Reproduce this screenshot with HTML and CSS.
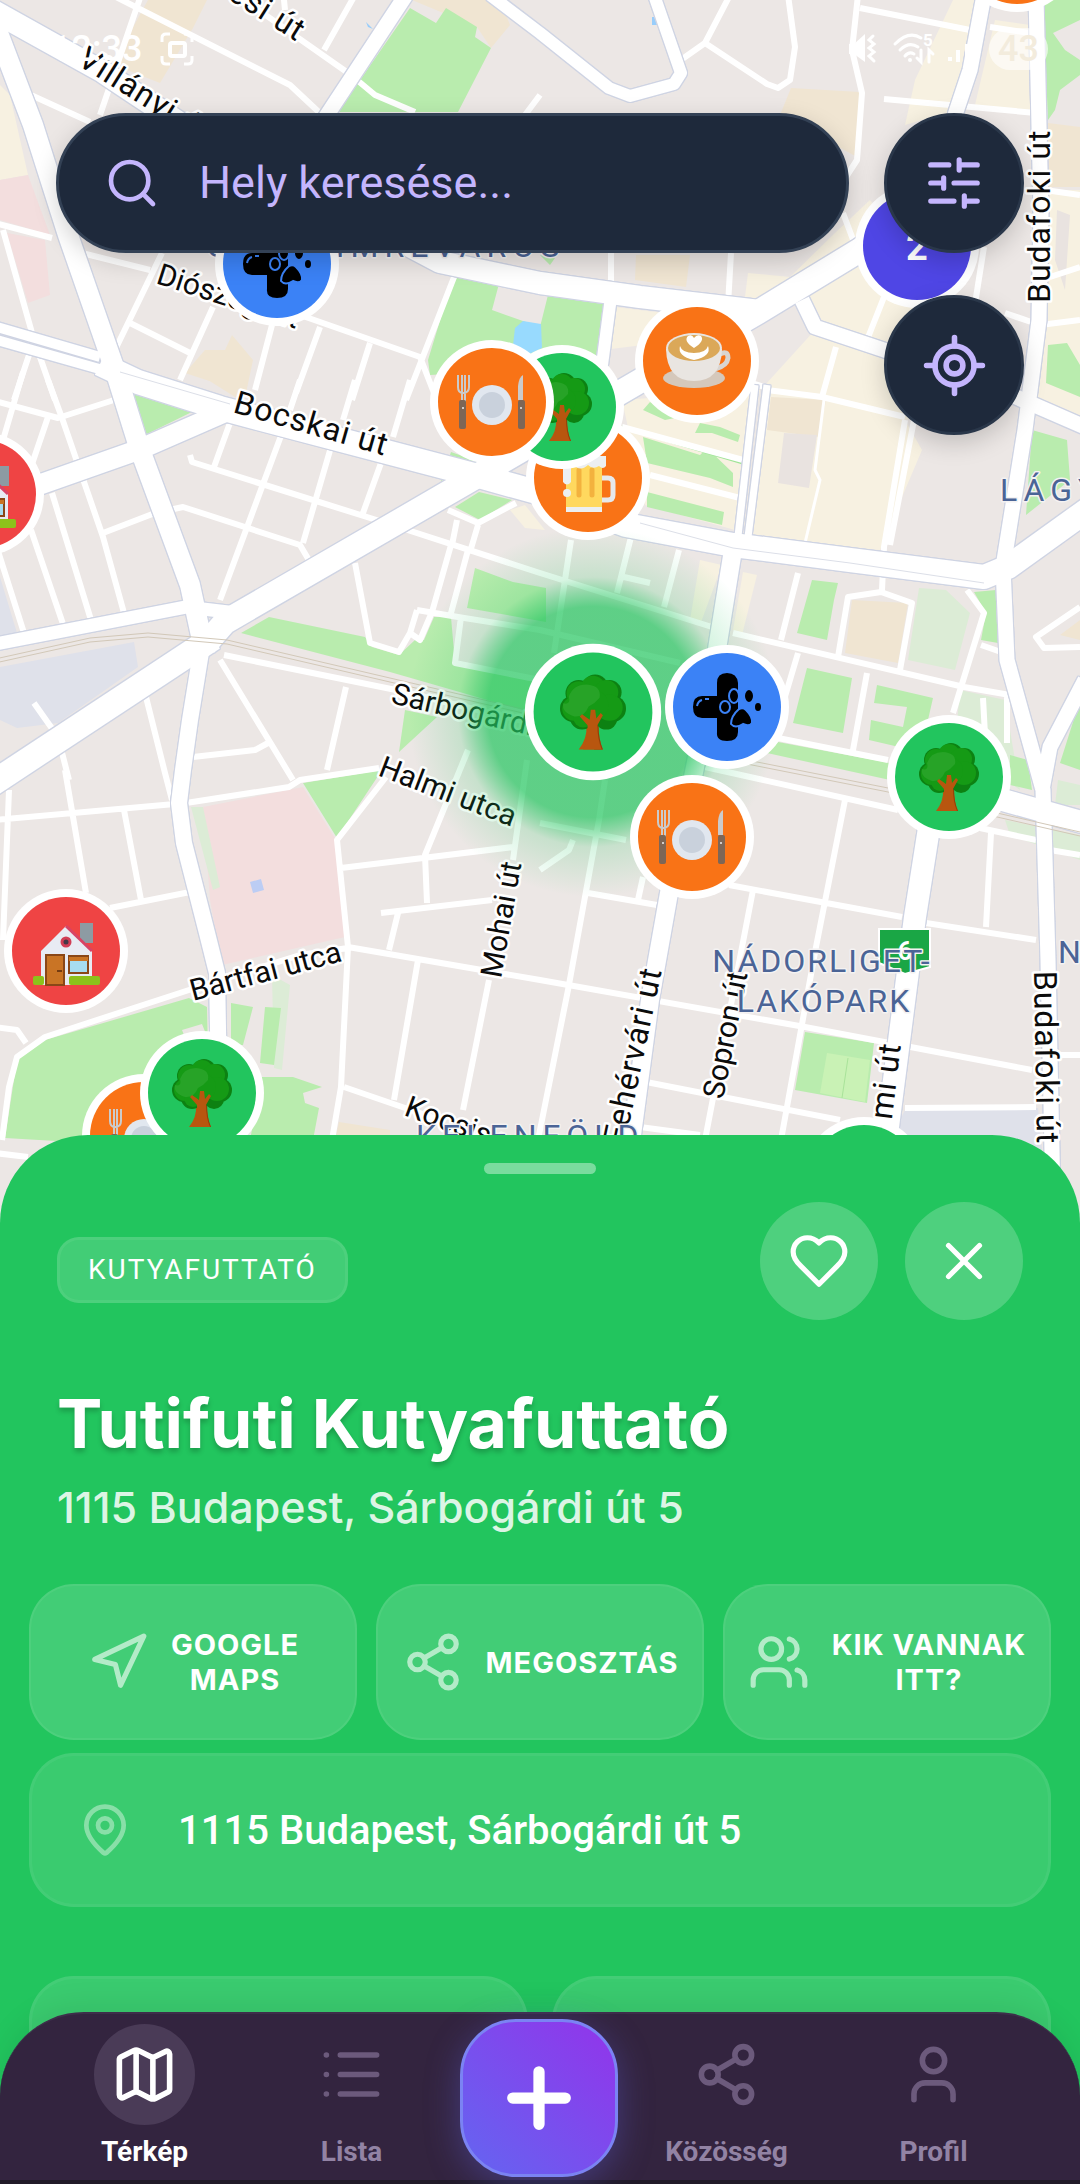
FILE: index.html
```html
<!DOCTYPE html>
<html lang="hu">
<head>
<meta charset="utf-8">
<meta name="viewport" content="width=device-width, initial-scale=1">
<title>Tutifuti Kutyafuttató</title>
<link rel="stylesheet" href="styles.css">
</head>
<body>
<div class="app">
<svg class="map" viewBox="0 0 1080 1240" role="img" aria-label="Térkép">
  <defs>
    <radialGradient id="glow">
      <stop offset="0" stop-color="#22c55e" stop-opacity=".7"/>
      <stop offset=".57" stop-color="#22c55e" stop-opacity=".7"/>
      <stop offset=".65" stop-color="#22c55e" stop-opacity=".45"/>
      <stop offset=".73" stop-color="#22c55e" stop-opacity=".18"/>
      <stop offset="1" stop-color="#22c55e" stop-opacity="0"/>
    </radialGradient>
    <g id="tree">
      <path fill="#b8560f" d="M-13 34Q-5 24-6 12L-13 2-10 0-4 6-2-4H2L4 5 9 0 11 3 5 12Q5 25 9 34Z"/>
      <path fill="#914108" d="M1 34Q4 20 2 10L9 1 11 3 5 12Q5 25 9 34Z"/>
      <g fill="#0d8112"><circle cx="2" cy="-22" r="12"/><circle cx="15" cy="-18" r="11"/><circle cx="18" cy="-3" r="12"/><circle cx="-13" cy="-17" r="12"/><circle cx="-18" cy="-3" r="12"/><circle cx="-10" cy="5" r="11"/><circle cx="12" cy="6" r="10"/></g>
      <g fill="#159a15"><circle cx="0" cy="-22" r="11"/><circle cx="12" cy="-18" r="11"/><circle cx="15" cy="-4" r="12"/><circle cx="-13" cy="-17" r="11"/><circle cx="-17" cy="-3" r="11"/><circle cx="0" cy="-6" r="14"/><circle cx="-9" cy="5" r="9"/></g>
      <path fill="#27a327" d="M-6-25Q8-24 6-13 2-8-4-5-8 5-17 4-29 0-27-8-20-6-22-14-18-25-6-25Z"/>
      <path fill="#b8560f" d="M-9 34Q-4 24-5 12L-12 4-10 2-3 7-2-2H2L3 6 7 1 9 3 4 12Q4 25 8 34Z"/>
    </g>
    <g id="plate">
      <path d="M-34-27V-15Q-34-9-29-9-23-9-23-15V-27M-30-27V0M-27-27V0" fill="none" stroke="#cbcbcb" stroke-width="2"/>
      <rect x="-33" y="-2" width="7" height="29" rx="2" fill="#7d6656"/><circle cx="-29" cy="6" r="1" fill="#eee"/>
      <circle cy="3" r="20" fill="#e1e7ef"/><circle cy="3" r="13" fill="#c9d1dc"/>
      <path fill="#cbcbcb" d="M26-2V-16Q27-25 31-27V-2Z"/><rect x="26" y="-2" width="7" height="29" rx="2" fill="#7d6656"/><circle cx="29" cy="6" r="1" fill="#eee"/>
    </g>
    <g id="house">
      <rect x="14" y="-28" width="13" height="20" fill="#8d9ba3"/>
      <path fill="#e8ebf3" d="M-25 0 0-25 26 0V34H-25Z"/><path d="M0-25 26 0" fill="none" stroke="#d84365" stroke-width="3"/>
      <circle cy="-9" r="4" fill="#453747" stroke="#d13d55" stroke-width="3"/>
      <rect x="-20" y="4" width="18" height="30" fill="#c97425" stroke="#8a4717" stroke-width="2"/><path d="M-9 20H-4" stroke="#743b12" stroke-width="2"/>
      <rect x="3" y="5" width="19" height="17" fill="#a7dcf0" stroke="#8a4717" stroke-width="2"/><path d="M3 8H22" stroke="#c97425" stroke-width="4"/>
      <rect x="-33" y="25" width="11" height="9" rx="2" fill="#8cc21b"/><rect x="3" y="25" width="31" height="9" rx="2" fill="#8cc21b"/>
    </g>
    <g id="coffee">
      <ellipse cx="-3" cy="17" rx="31" ry="10" fill="#d5c8bb"/>
      <path d="M23-7Q31-11 31-3 30 5 18 8" fill="none" stroke="#d9d5d1" stroke-width="5"/>
      <path fill="#e9e5e1" d="M-31-12Q-30 20-3 20T25-12Z"/>
      <ellipse cx="-3" cy="-13" rx="28" ry="15" fill="#e9e5e1"/><ellipse cx="-3" cy="-13" rx="26" ry="13" fill="#dba858"/>
      <path fill="#fff" d="M-3-13Q-14-20-9-25-5-27-3-23 0-27 4-25 8-20-3-13ZM-17-15Q-15-8-3-8 9-8 11-15 15-5-3-1-20-5-17-15Z"/>
    </g>
    <g id="beer">
      <path d="M14 0H20Q25 0 25 5V17Q25 22 20 22H14" fill="none" stroke="#e6e9ec" stroke-width="5"/>
      <rect x="-22" y="-20" width="36" height="50" fill="#ffd85e"/><path d="M-9-8V17M4-8V17" stroke="#f3b23e" stroke-width="5" stroke-linecap="round"/>
      <rect x="-22" y="29" width="36" height="5" fill="#eceff1"/>
      <path fill="#eceff1" d="M-25-22H18V-12Q15-8 11-12 5-8 0-13-8-6-14-13L-17-12V4Q-21 9-25 4Z"/><circle cx="-21" cy="15" r="4" fill="#eceff1"/>
    </g>
    <g id="vet">
      <path d="M-10-24Q-10-34 0-34T11-24V25Q11 34 0 34T-10 25V11H-25Q-34 11-34 0T-25-11H-10Z"/>
      <g stroke="#3b82f6" stroke-width="2"><ellipse cx="7" cy="-11" rx="5" ry="7"/><ellipse cx="22" cy="-11" rx="5" ry="7"/><ellipse cx="31" cy="0" rx="4" ry="5"/><ellipse cx="-2" cy="0" rx="5" ry="6"/><path d="M4 17Q4 9 12 2 16 0 19 3 26 10 25 16 22 20 16 17 8 22 4 17Z"/></g>
      <path d="M-30-1Q-29-6-25-7M-22-8H-18" fill="none" stroke="#3b82f6" stroke-width="2"/>
    </g>
    <g id="orange"><circle r="62" fill="#fff"/><circle r="54" fill="#f97316"/></g>
    <g id="green"><circle r="62" fill="#fff"/><circle r="54" fill="#22c55e"/></g>
    <g id="red"><circle r="62" fill="#fff"/><circle r="54" fill="#ef4444"/></g>
    <g id="blue"><circle r="62" fill="#fff"/><circle r="54" fill="#3b82f6"/></g>
    <g id="avenues">
      <path stroke-width="22" d="M-10 9 103 72 190 130 440 262 540 283 640 297 760 311"/>
      <path stroke-width="20" d="M-5 25 33 125 68 235 115 370 139 447 190 585 203 645"/>
      <path stroke-width="16" d="M203 640 190 720 183 770 179 803 184 843 207 933 217 973 220 1140"/>
      <path stroke-width="10" d="M-10 325 100 357M-10 338 110 372"/>
      <path stroke-width="24" d="M100 364 138 382 220 408 379 450 482 477 540 493 626 525 733 545 850 560 984 577 1008 567 1090 508"/>
      <path stroke-width="20" d="M-20 506 30 488 138 450 225 412"/>
      <path stroke-width="24" d="M205 645 225 622 465 483 760 311 860 250 930 200"/>
      <path stroke-width="25" d="M213 638 -10 785"/>
      <path stroke-width="13" d="M-10 645 186 607 245 614"/>
      <path stroke-width="12" d="M611 297 602 365"/>
      <path stroke-width="7" d="M755 385 737 545M767 385 747 545"/>
      <path stroke-width="18" d="M733 550 712 680 695 767 669 893 650 1000 630 1150"/>
      <path stroke-width="15" d="M1036-5 1041 213 1039 320 1025 430 1003 567 1007 660 1043 790 1048 960 1053 1200M1085 680 1050 747 1042 790M984-5 970 70 955 115"/>
      <path stroke-width="15" d="M802 300 815 327 884 350 1000 390 1085 427"/>
      <path stroke-width="22" d="M935 790 915 917 885 1150"/>
      <path stroke-width="22" d="M960 788 1085 823"/>
      <path stroke-width="12" d="M490-5 540 33 609 88 630 96 674 84 681 73 654-5"/>
      <path stroke-width="15" d="M406-5 327 115 240 250"/>
    </g>
  </defs>

  <rect width="1080" height="1240" fill="#ece7e5"/>

  <g fill="#f7f1e1">
    <path d="M0 85 10 95 28 175 0 180ZM953 0H977L967 77 950 112 905 125 915 80ZM995 20 1030 25 1032 110 975 105ZM748 273 790 277 835 233 870 200 900 240 930 300 884 345 820 325 800 305 745 297ZM615 307 680 315 643 345 603 350ZM765 385 815 330 900 355 1010 395 905 420 922 450 905 490 880 550 750 540ZM622 400 760 390 735 530 645 505ZM1048 190H1080V420L1030 405ZM510 510 525 505 545 530 525 528ZM700 560 722 565 700 625 690 620ZM743 572 757 575 742 635 733 630Z"/>
  </g>
  <g fill="#f0e5d2">
    <path d="M148 0H207L193 28 160 83 127 70 115 60ZM412 0H500L510 25 491 48 477 27ZM185 373 205 350 225 350 232 335 253 360 246 393ZM200 375 255 393 240 400ZM791 88 860 92 857 157 780 115ZM636 255H690L686 287 635 280ZM771 397 826 400 819 437 767 430ZM1048 123 1080 127V187H1048ZM852 600 908 603 898 663 845 653ZM1060 635 1080 620V640ZM339 1122 390 1130V1140H335Z"/>
  </g>
  <path fill="#f3dede" d="M0 180 28 175 50 235 0 220ZM7 233 45 240 50 295 28 303ZM203 807 303 787 336 840 345 937 222 965 210 900Z"/>
  <path fill="#e9e3e0" d="M784 433 817 435 809 488 778 483ZM1057 210 1070 215 1065 290 1055 260Z"/>
  <path fill="#dfe1ea" d="M0 577 17 633 0 640ZM0 667 134 642 138 667 58 723 17 728 0 720ZM905 1110 1038 1108 1045 1180 890 1140Z"/>
  <path fill="#dcecd6" d="M191 807H203L220 887 213 890ZM272 975 290 985 282 1070 274 1068ZM919 588 946 590 970 613 955 670 908 660ZM960 690 1005 700 1020 790 955 745ZM1058 780 1080 785V805H1055ZM1005 820 1080 835V860L1010 835Z"/>
  <g fill="#b9ecae">
    <path d="M410 8 436 23 446 8 477 27 475 37 491 48 458 112H337L358 83ZM456 268 500 280 492 310 540 327 548 295 605 302 597 365 430 375 428 360ZM127 387 200 408 145 435ZM451 452 482 463 449 458ZM441 480 455 488 443 490ZM455 507 479 492 512 500 480 520Z"/>
    <path d="M241 633 269 617 365 637 372 647 399 655 415 640H424L434 617H451L455 663 540 682V715L390 672ZM475 568 513 582 546 588V622L467 608ZM405 710 437 717 399 752ZM303 783 382 770 337 838Z"/>
    <path d="M45 1040 189 998 207 1007 210 1150 5 1138 17 1060ZM231 1003 253 1007 243 1045H231ZM265 1007 281 1008 274 1065 260 1063ZM262 1077H293L322 1087 303 1093 305 1103 319 1108 313 1140H250Z"/>
    <path d="M1043 0H1080V20L1053 33 1065 50 1080 60V75L1060 90 1055 110 1048 120ZM1048 345 1067 343 1080 365V397L1046 383ZM1032 430 1067 440 1070 480 1026 515ZM812 580 838 583 834 600 827 640 797 633ZM974 592 996 590 998 643 981 640 986 613ZM807 668 852 678 843 733 793 723ZM877 685 933 698 925 733 912 750 869 740 871 720 903 727 907 707 874 703ZM1080 700 1060 763 1080 770ZM778 742 890 763V780L767 753ZM1010 755 1028 760 1032 790 1010 785Z"/>
    <path d="M643 437 700 455 707 448 733 473V487L710 478 647 463ZM647 492 724 512 722 525 647 507ZM643 410 650 402 675 418 665 420ZM695 433 700 423 720 427 740 435 738 442 712 433ZM805 1032 874 1043 867 1103 795 1090ZM540 255 555 258 550 265Z"/>
    <path fill="#c9f2b5" d="M827 1053 870 1060 865 1102 820 1093Z"/>
    <path fill="#ece7e5" d="M182 1030 202 1024 206 1034 186 1040Z"/>
  </g>
  <path d="M848 1058 842 1098" stroke="#a9e39a" stroke-width="1"/>
  <path d="M622 427 743 463" stroke="#9fe497" stroke-width="3"/>
  <path fill="#98dafe" d="M513 345 515 328 523 321 541 324 542 348 525 356Z"/>
  <path fill="#98cdfb" d="M366 22 373 29 368 27ZM652 17H657V25H652Z"/>
  <path fill="#bccdf4" d="M250 882 261 879 264 890 253 893Z"/>

  <g class="streets">
    <path d="M141-5 100 115M112-5 290 85 322 115M355-5 324 50M283-10 285 10M230-10 351 75 375 95 415 112M20 90 90 122M540 95 525 115M-5 223 52 238M3 230 34 340 55 400M82 253 150 270M162 253 115 350M213 307 180 380M130 323 190 353M300 315 420 357 434 393M272 325 255 390M320 327 296 393M370 343 352 400M458 267 406 400M34 340 14 400"/>
    <path d="M730-5 705 43 678 62M788-5 795 47 790 80 778 88 767 84 705 43M858-5 852 50 862 93 857 160 846 177M860 8 970 30M990 27 1036 34M884 99 1036 113M611 253V290M731 253 728 305M843 213 855 245M884 297 867 340M984 247 974 310M836 347 822 397M767 390 822 397 905 417M1045 190 1080 195M1050 277 1080 267M1005 313 1040 325 1080 320M742 380 768 388"/>
    <path d="M23 372 3 440M-5 401 58 418 114 400M48 380 62 418 103 537 124 613M48 417 31 467M52 493 91 620M31 530 64 627M-3 548 24 633M103 533 155 513 183 507 300 545 313 567M190 455 192 462 386 523 540 573 712 627M231 420 214 467M282 433 220 600M331 447 303 543M381 463 363 513M300 380 290 410M355 380 343 420M410 380 393 437M355 563 370 643 399 652 410 633 417 610M410 633 420 640 432 612 451 545M417 610 458 617 540 630 680 663M468 550 451 613M461 617 455 663 540 680M448 510 478 523 516 503M457 520 452 545M478 525 470 552"/>
    <path d="M220 660 293 780M224 655 396 690 560 730M346 687 327 770M34 703 58 737 69 780M145 693 165 773 172 800M193 757 255 750 268 743M65 770 86 893M9 790 3 940M-5 820 186 803 289 787 300 780 379 768M124 810 141 900M110 908 190 892M386 777 337 840 348 947 341 1087 332 1140M341 868 513 847M468 750 425 855 427 903M381 913 492 900M398 913 389 950M348 947 540 980 805 1027 1032 1070M418 960 394 1100M344 1087 440 1120M489 980 463 1110M527 760 513 860M-5 1027 17 1030 26 1043M-5 1153 28 1157M348 948 300 955 189 990 45 1037 17 1057 9 1087 2 1140"/>
    <path d="M571 540 554 653M631 537 617 593M679 550 664 607M624 577 650 583M733 633 964 687 1010 695M798 573 781 640M838 657 848 597 881 592 912 603 900 670M798 653 784 700M867 673 853 750M967 590 984 613 953 713M981 645 1001 652M983 698 985 735M1007 695V743M778 738 888 760M1080 607 1036 637 1044 648 1080 647M622 427 743 460M650 475 740 498M905 420 884 547 882 590M914 420 890 545"/>
    <path d="M705 767 898 810M845 800 816 947 781 1140M729 885 902 917M926 923 1036 940M753 890 705 1140M991 833 986 927M980 828 1036 840M605 780 599 820 568 990 538 1140M540 823 626 840M588 893 657 905M573 840 569 850 540 870M643 877 638 900M636 1080 840 1120M905 1108 1036 1107M1050 1055 1080 1055M1050 850 1080 855M640 1127 700 1135"/>
    <path stroke-width="3" d="M824 400 815 470 820 480 805 543"/>
  </g>
  <use href="#avenues" class="casing"/>
  <use href="#avenues" class="fill"/>
  <path class="rail" d="M-5 659 90 638 148 633 227 640 540 713M-5 663 90 642 148 637 227 644 540 717M747 760 888 788 1080 832M747 764 888 792 1080 836"/>
  <path class="rail lane" d="M640 523 733 548 850 563 984 583M120 372 230 404"/>

  <g class="road-name">
    <text transform="translate(297 42) rotate(32)" text-anchor="end">Ménesi út</text>
    <text transform="translate(76 64) rotate(32)">Villányi út</text>
    <text class="small" transform="translate(155 283) rotate(18)">Diószegi út</text>
    <text transform="translate(232 412) rotate(16)">Bocskai út</text>
    <text class="small" transform="translate(390 703) rotate(13)">Sárbogárdi út</text>
    <text class="small" transform="translate(377 775) rotate(21)">Halmi utca</text>
    <text class="small" transform="translate(501 979) rotate(-80)">Mohai út</text>
    <text class="small" transform="translate(193 1001) rotate(-15)">Bártfai utca</text>
    <text class="small" transform="translate(403 1115) rotate(20)">Kocsis utca</text>
    <text transform="translate(662 970) rotate(-78)" text-anchor="end">Fehérvári út</text>
    <text class="small" transform="translate(723 1100) rotate(-79)">Sopron út</text>
    <text transform="translate(901 1044) rotate(-83)" text-anchor="end">Etele mi út</text>
    <text transform="translate(1034 971) rotate(89)">Budafoki út</text>
    <text transform="translate(1050 303) rotate(-90)">Budafoki út</text>
  </g>
  <path d="M879 929H930V967L905 974 879 963Z" fill="#1aa645" stroke="#fff" stroke-width="2"/>
  <text x="905" y="960" text-anchor="middle" class="shield">6</text>
  <g class="district">
    <text class="wide" x="208" y="257">SZENTIMREVÁROS</text>
    <text class="wide" x="416" y="1147">KELENFÖLD</text>
    <text x="822" y="972" text-anchor="middle">NÁDORLIGET-</text>
    <text x="824" y="1012" text-anchor="middle">LAKÓPARK</text>
    <text class="wide" x="1000" y="501">LÁGYMÁNYOS</text>
    <text x="1058" y="963">NÁDOR</text>
  </g>

  <circle cx="593" cy="712" r="185" fill="url(#glow)"/>
  <g transform="translate(1017 -50)"><use href="#orange"/></g>
  <g transform="translate(277 264)"><use href="#blue"/><use href="#vet"/></g>
  <g transform="translate(917 246)"><circle r="62" fill="#fff"/><circle r="54" fill="#4f46e5"/><text y="14" text-anchor="middle" class="cluster">2</text></g>
  <g transform="translate(697 361)"><use href="#orange"/><use href="#coffee"/></g>
  <g transform="translate(588 478)"><use href="#orange"/><use href="#beer"/></g>
  <g transform="translate(562 407)"><use href="#green"/><use href="#tree"/></g>
  <g transform="translate(492 402)"><use href="#orange"/><use href="#plate"/></g>
  <g transform="translate(-18 494)"><use href="#red"/><use href="#house"/></g>
  <g transform="translate(66 951)"><use href="#red"/><use href="#house"/></g>
  <g transform="translate(727 707)"><use href="#blue"/><use href="#vet"/></g>
  <g transform="translate(949 777)"><use href="#green"/><use href="#tree"/></g>
  <g transform="translate(692 837)"><use href="#orange"/><use href="#plate"/></g>
  <g transform="translate(144 1136)"><use href="#orange"/><use href="#plate"/></g>
  <g transform="translate(202 1093)"><use href="#green"/><use href="#tree"/></g>
  <g transform="translate(864 1179)"><use href="#green"/><use href="#tree"/></g>
  <g transform="translate(593 712) scale(1.1)"><use href="#green"/><use href="#tree"/></g>
</svg>

<header class="top">
  <div class="status">
    <span class="clock">12:33</span>
    <svg class="capture" viewBox="0 0 34 34" aria-hidden="true"><path d="M2 10V6Q2 2 6 2H10M24 2H28Q32 2 32 6V10M32 24V28Q32 32 28 32H24M10 32H6Q2 32 2 28V24" fill="none" stroke="#fff" stroke-width="3"/><rect x="10" y="11" width="15" height="13" rx="2" fill="none" stroke="#fff" stroke-width="4"/></svg>
    <svg class="signals" viewBox="0 0 130 42" aria-hidden="true"><g fill="none" stroke="#fff" stroke-width="3" stroke-linecap="round"><path d="M24 8 20 12 25 16 20 20 25 24 20 28 25 33"/><path d="M46 16Q60 2 72 10M51 22Q60 13 69 19M56 28Q60 23 65 26M72 22V34L68 30M80 34V22L84 26"/></g><path fill="#fff" d="M0 16H5L16 6V34L5 26H0ZM99 29H103V33H99ZM107 22H111V34H107ZM116 16H120V34H116Z"/><circle cx="61" cy="32" r="2" fill="#fff"/><text x="74" y="18" class="gen">5</text></svg>
    <span class="battery">43</span>
  </div>
  <div class="tools">
    <label class="search">
      <svg class="icon i56" viewBox="0 0 24 24" aria-hidden="true"><circle cx="11" cy="11" r="8"/><path d="m21 21-4.300-4.300"/></svg>
      <input type="search" placeholder="Hely keresése..." aria-label="Hely keresése">
    </label>
    <div class="tool-stack">
      <button class="round" aria-label="Szűrők"><svg class="icon i62" viewBox="0 0 24 24"><path d="M10 5H3M12 19H3M14 3v4M16 17v4M21 12h-9M21 19h-5M21 5h-7M8 10v4M8 12H3"/></svg></button>
      <button class="round" aria-label="Saját helyzet"><svg class="icon i67" viewBox="0 0 24 24"><path d="M2 12h3M19 12h3M12 2v3M12 19v3"/><circle cx="12" cy="12" r="7"/><circle cx="12" cy="12" r="3"/></svg></button>
    </div>
  </div>
</header>

<main class="sheet">
  <div class="handle"></div>
  <div class="sheet-head">
    <span class="chip">KUTYAFUTTATÓ</span>
    <div class="sheet-buttons">
      <button class="ghost" aria-label="Kedvenc"><svg class="icon i62" viewBox="0 0 24 24"><path d="M19 14c1.490-1.460 3-3.210 3-5.500A5.500 5.500 0 0 0 16.500 3c-1.760 0-3 .5-4.500 2-1.500-1.500-2.740-2-4.500-2A5.500 5.500 0 0 0 2 8.500c0 2.300 1.500 4.050 3 5.500l7 7Z"/></svg></button>
      <button class="ghost" aria-label="Bezárás"><svg class="icon i62" viewBox="0 0 24 24"><path d="M18 6 6 18M6 6l12 12"/></svg></button>
    </div>
  </div>
  <div class="title-block">
    <h1>Tutifuti Kutyafuttató</h1>
    <p>1115 Budapest, Sárbogárdi út 5</p>
  </div>
  <div class="actions">
    <button class="action"><svg class="icon i62" viewBox="0 0 24 24"><path d="M3 11 22 2 13 21 11 13Z"/></svg><span>GOOGLE<br>MAPS</span></button>
    <button class="action"><svg class="icon i62" viewBox="0 0 24 24"><circle cx="18" cy="5" r="3"/><circle cx="6" cy="12" r="3"/><circle cx="18" cy="19" r="3"/><path d="m8.590 13.510 6.830 3.980M15.410 6.510l-6.820 3.980"/></svg><span>MEGOSZTÁS</span></button>
    <button class="action"><svg class="icon i62" viewBox="0 0 24 24"><path d="M16 21v-2a4 4 0 0 0-4-4H6a4 4 0 0 0-4 4v2M22 21v-2a4 4 0 0 0-3-3.870M16 3.130a4 4 0 0 1 0 7.750"/><circle cx="9" cy="7" r="4"/></svg><span>KIK VANNAK<br>ITT?</span></button>
  </div>
  <div class="info">
    <svg class="icon i56" viewBox="0 0 24 24" aria-hidden="true"><path d="M20 10c0 4.990-5.540 10.190-7.400 11.800a1 1 0 0 1-1.200 0C9.540 20.190 4 14.990 4 10a8 8 0 0 1 16 0"/><circle cx="12" cy="10" r="3"/></svg>
    <span>1115 Budapest, Sárbogárdi út 5</span>
  </div>
  <div class="cards"><div class="card"></div><div class="card"></div></div>
</main>

<nav class="nav">
  <a class="tab active" href="#terkep"><span class="disc"><svg class="icon i67" viewBox="0 0 24 24"><path d="M14.106 5.553a2 2 0 0 0 1.788 0l3.659-1.830A1 1 0 0 1 21 4.619v12.764a1 1 0 0 1-.553.894l-4.553 2.277a2 2 0 0 1-1.788 0l-4.212-2.106a2 2 0 0 0-1.788 0l-3.659 1.830A1 1 0 0 1 3 19.381V6.618a1 1 0 0 1 .553-.894l4.553-2.277a2 2 0 0 1 1.788 0zM15 5.764v15M9 3.236v15"/></svg></span>Térkép</a>
  <a class="tab" href="#lista"><span class="disc"><svg class="icon i67" viewBox="0 0 24 24"><path d="M3 5h.01M3 12h.01M3 19h.01M8 5h13M8 12h13M8 19h13"/></svg></span>Lista</a>
  <button class="add" aria-label="Új hely"><svg class="icon i90" viewBox="0 0 24 24"><path d="M5 12h14M12 5v14"/></svg></button>
  <a class="tab" href="#kozosseg"><span class="disc"><svg class="icon i67" viewBox="0 0 24 24"><circle cx="18" cy="5" r="3"/><circle cx="6" cy="12" r="3"/><circle cx="18" cy="19" r="3"/><path d="m8.590 13.510 6.830 3.980M15.410 6.510l-6.820 3.980"/></svg></span>Közösség</a>
  <a class="tab" href="#profil"><span class="disc"><svg class="icon i67" viewBox="0 0 24 24"><path d="M19 21v-2a4 4 0 0 0-4-4H9a4 4 0 0 0-4 4v2"/><circle cx="12" cy="7" r="4"/></svg></span>Profil</a>
</nav>
</div>
</body>
</html>
```
FILE: styles.css
```css
* { box-sizing: border-box; }
body { margin: 0; font-family: Roboto, "Noto Sans", sans-serif; }
button { border: 0; padding: 0; font: inherit; color: inherit; cursor: pointer; }

.app {
  position: relative;
  display: flex;
  flex-direction: column;
  height: 100vh;
  overflow: hidden;
  background: #ece7e5;
}

/* Map canvas behind everything */
.map { position: absolute; top: 0; left: 0; width: 100%; }
.streets { fill: none; stroke: #fff; stroke-width: 6; stroke-linejoin: round; }
.casing, .fill { fill: none; stroke-linejoin: round; }
.casing { stroke: #cfd4e3; }
.fill { stroke: #fff; }
.casing { filter: drop-shadow(1px 0 #cfd4e3) drop-shadow(-1px 0 #cfd4e3) drop-shadow(0 1px #cfd4e3) drop-shadow(0 -1px #cfd4e3); }
.rail { fill: none; stroke: #d2c8b8; stroke-width: 1; }
.rail.lane { stroke: #dcdfe8; }
.road-name text {
  font-size: 32px;
  letter-spacing: 1px;
  fill: #0b0b0b;
  stroke: #fff;
  stroke-width: 5px;
  stroke-linejoin: round;
  paint-order: stroke;
}
.road-name .small { font-size: 30px; letter-spacing: 0; }
.district text {
  font-size: 32px;
  letter-spacing: 2px;
  fill: #4b6496;
  stroke: #f4f2f2;
  stroke-width: 3px;
  stroke-linejoin: round;
  paint-order: stroke;
}
.district .wide { letter-spacing: 6px; }
.shield { font-size: 26px; font-weight: 700; fill: #fff; }
.cluster { font-size: 38px; font-weight: 700; fill: #fff; }
.gen { font-size: 17px; font-weight: 700; fill: #fff; }

/* Icons */
.icon {
  flex: none;
  fill: none;
  stroke: currentColor;
  stroke-width: 2;
  stroke-linecap: round;
  stroke-linejoin: round;
}
.i56 { width: 56px; height: 56px; }
.i62 { width: 62px; height: 62px; }
.i67 { width: 67px; height: 67px; }
.i90 { width: 90px; height: 90px; stroke-width: 3; }

/* Top overlay */
.top { position: relative; flex: 1; padding: 0 56px; }
.status {
  display: flex;
  align-items: center;
  height: 113px;
  padding: 0 0 15px;
  margin: 0 -24px 0 -5px;
  color: #fff;
}
.clock { font-size: 36px; font-weight: 500; margin-right: 18px; }
.capture { width: 34px; height: 34px; }
.signals { width: 130px; height: 42px; margin-left: auto; margin-right: 10px; }
.battery {
  padding: 0 9px;
  border-radius: 21px;
  background: rgba(255, 255, 255, .6);
  color: #f3ecdd;
  font-size: 36px;
  font-weight: 500;
  line-height: 42px;
}
.tools { display: flex; align-items: flex-start; gap: 35px; }
.search {
  flex: 1;
  display: flex;
  align-items: center;
  gap: 39px;
  height: 140px;
  padding: 0 45px;
  border: 3px solid #334155;
  border-radius: 70px;
  background: #1e293b;
  color: #c4b5fd;
  box-shadow: 0 8px 24px rgba(0, 0, 0, .18);
}
.search input {
  flex: 1;
  min-width: 0;
  padding: 0;
  border: 0;
  outline: 0;
  background: none;
  color: inherit;
  font: 400 45px/56px Roboto, sans-serif;
}
.search input::placeholder { color: #c4b5fd; opacity: 1; }
.tool-stack { display: flex; flex-direction: column; gap: 42px; }
.round {
  display: grid;
  place-items: center;
  width: 140px;
  height: 140px;
  border: 3px solid #2a374a;
  border-radius: 50%;
  background: #1e293b;
  color: #c4b5fd;
  box-shadow: 0 8px 24px rgba(0, 0, 0, .18);
}

/* Place sheet */
.sheet {
  position: relative;
  padding: 28px 29px 0;
  border-radius: 88px 88px 0 0;
  background: #22c55e;
  color: #fff;
}
.handle {
  width: 112px;
  height: 11px;
  margin: 0 auto 28px;
  border-radius: 6px;
  background: rgba(255, 255, 255, .4);
}
.sheet-head {
  display: flex;
  justify-content: space-between;
  align-items: flex-start;
  padding: 0 28px;
}
.chip {
  margin-top: 35px;
  padding: 0 28px;
  border: 3px solid rgba(255, 255, 255, .06);
  border-radius: 22px;
  background: rgba(255, 255, 255, .15);
  font-size: 28px;
  line-height: 60px;
  letter-spacing: 2px;
}
.sheet-buttons { display: flex; gap: 27px; }
.ghost {
  display: grid;
  place-items: center;
  width: 118px;
  height: 118px;
  border-radius: 50%;
  background: rgba(255, 255, 255, .2);
}
.title-block { padding: 61px 28px 49px; font-family: Inter, sans-serif; }
.title-block h1 {
  margin: 0 0 14px;
  font-size: 68px;
  line-height: 84px;
  font-weight: 700;
  text-shadow: 0 4px 5px rgba(0, 0, 0, .2);
}
.title-block p {
  margin: 0;
  font-size: 43px;
  line-height: 56px;
  font-weight: 500;
  color: rgba(255, 255, 255, .85);
}
.actions { display: grid; grid-template-columns: repeat(3, 1fr); gap: 19px; }
.action {
  display: flex;
  align-items: center;
  justify-content: center;
  gap: 22px;
  height: 156px;
  border: 2px solid rgba(255, 255, 255, .06);
  border-radius: 45px;
  background: rgba(255, 255, 255, .15);
  font: 700 29px/35px Inter, sans-serif;
  letter-spacing: 1px;
  color: #fff;
}
.action .icon { opacity: .6; }
.info {
  display: flex;
  align-items: center;
  gap: 45px;
  height: 154px;
  margin: 13px 0 69px;
  padding: 0 45px;
  border: 3px solid rgba(255, 255, 255, .05);
  border-radius: 45px;
  background: rgba(255, 255, 255, .11);
  font-size: 40px;
  font-weight: 500;
}
.info .icon { opacity: .4; }
.cards { display: grid; grid-template-columns: 1fr 1fr; gap: 24px; }
.card {
  height: 208px;
  border: 3px solid rgba(255, 255, 255, .05);
  border-radius: 45px 45px 0 0;
  background: rgba(255, 255, 255, .11);
}

/* Bottom navigation, over the sheet */
.nav {
  position: absolute;
  left: 0;
  right: 0;
  bottom: 0;
  display: grid;
  grid-template-columns: 1fr 1fr 168px 1fr 1fr;
  justify-items: center;
  padding: 10px 43px 11px 41px;
  border-top: 2px solid #3d2e4a;
  border-bottom: 4px solid #211a28;
  border-radius: 84px 84px 0 0;
  background: #33243f;
  box-shadow: 0 -6px 30px rgba(0, 0, 0, .08);
}
.tab {
  display: flex;
  flex-direction: column;
  align-items: center;
  gap: 10px;
  color: #9283a4;
  font-size: 28px;
  font-weight: 700;
  line-height: 34px;
  text-decoration: none;
}
.tab .icon { color: #6c5a7c; }
.disc { display: grid; place-items: center; width: 101px; height: 101px; border-radius: 50%; }
.tab.active, .tab.active .icon { color: #fff; }
.active .disc { background: #4a3b57; }
.add {
  display: grid;
  place-items: center;
  align-self: start;
  width: 158px;
  height: 158px;
  margin: -5px 0 -10px;
  border: 3px solid #7b83f3;
  border-radius: 56px;
  background: linear-gradient(45deg, #6366f1, #9333ea) border-box;
  color: #fff;
  box-shadow: 0 8px 34px rgba(99, 102, 241, .35);
}
```
